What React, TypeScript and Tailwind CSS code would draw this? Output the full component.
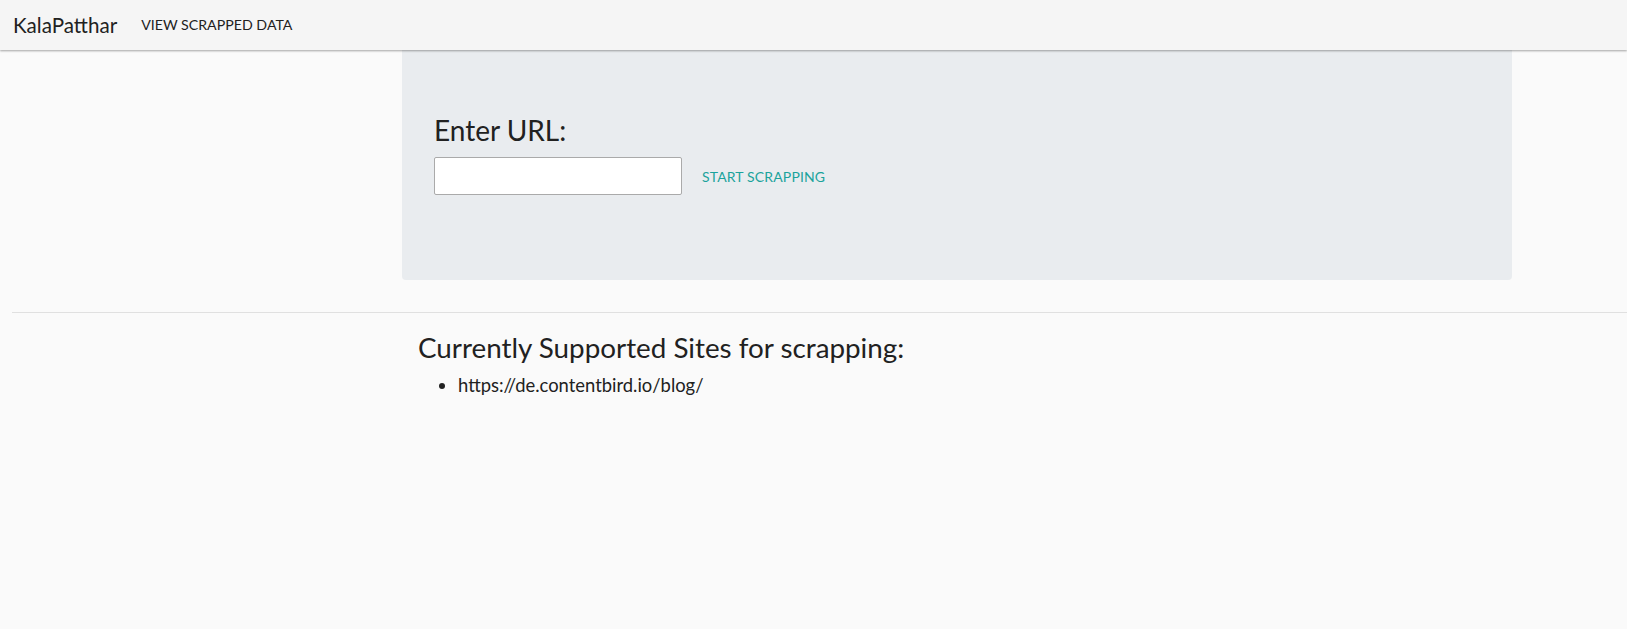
import { useState } from "react";

export default function App() {
  const [url, setUrl] = useState("");

  return (
    <div className="min-h-[629px] bg-[#fafafa] font-['Lato',_'Open_Sans',_sans-serif] text-[#212121]">
      {/* Top bar */}
      <nav className="relative z-10 flex h-[50px] items-center bg-[#f5f5f5] pl-[13px] shadow-[0_1px_2px_rgba(0,0,0,0.35)]">
        <span className="text-[20.6px] leading-none">KalaPatthar</span>
        <a href="#" className="ml-[24px] text-[14.2px] uppercase leading-none text-[#212121]">
          View Scrapped Data
        </a>
      </nav>

      {/* URL form */}
      <div className="ml-[402px] h-[230px] w-[1110px] rounded-b-[4px] bg-[#e9ecef] px-8 pt-16">
        <label className="block text-[28px] leading-[1.2]">Enter URL:</label>
        <div className="mt-[9px] flex items-center gap-5">
          <input
            value={url}
            onChange={(e) => setUrl(e.target.value)}
            className="h-[38px] w-[248px] rounded-[2px] border border-[#aaaaaa] bg-white px-2 text-[16px] outline-none"
          />
          <button className="mt-[1px] text-[14px] uppercase tracking-[0.01em] text-[#1ba39c]">
            Start Scrapping
          </button>
        </div>
      </div>

      <hr className="ml-3 mt-8 border-0 border-t border-[#e0e0e0]" />

      {/* Supported sites */}
      <div className="ml-[418px] pt-[18px]">
        <h4 className="text-[27.8px] leading-[1.2]">Currently Supported Sites for scrapping:</h4>
        <ul className="mt-[10px] list-disc pl-10 text-[18.4px] leading-[1.2]">
          <li>https://de.contentbird.io/blog/</li>
        </ul>
      </div>
    </div>
  );
}
